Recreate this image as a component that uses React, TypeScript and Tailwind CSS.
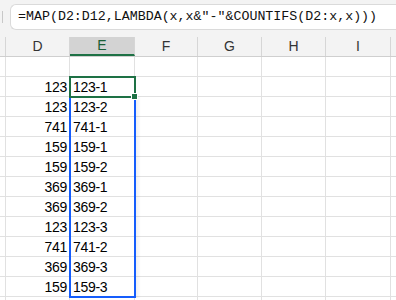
import React from 'react'

const COLS = ['D', 'E', 'F', 'G', 'H', 'I']
const WIDTHS = ['w-[64px]', 'w-[65px]', 'w-[63px]', 'w-[64px]', 'w-[64px]', 'w-[65px]']

const DATA: [number, string][] = [
  [123, '123-1'],
  [123, '123-2'],
  [741, '741-1'],
  [159, '159-1'],
  [159, '159-2'],
  [369, '369-1'],
  [369, '369-2'],
  [123, '123-3'],
  [741, '741-2'],
  [369, '369-3'],
  [159, '159-3'],
]

const FORMULA = '=MAP(D2:D12,LAMBDA(x,x&"-"&COUNTIFS(D2:x,x)))'

const Row = ({ d, e }: { d?: number; e?: string }) => (
  <div className="flex h-[20px]">
    <div className="w-[6px] shrink-0 border-b border-r border-[#e1e1e1]" />
    {COLS.map((c, i) => (
      <div
        key={c}
        className={`${WIDTHS[i]} shrink-0 border-b border-r border-[#e1e1e1] leading-[19px] pt-[1px] text-[14px] tracking-[-0.3px] text-black ${
          i === 0 ? 'text-right pr-[2px]' : 'pl-[3px]'
        }`}
      >
        {i === 0 ? d : i === 1 ? e : null}
      </div>
    ))}
    <div className="flex-1 border-b border-[#e1e1e1]" />
  </div>
)

export default function App() {
  return (
    <div className="relative w-[396px] h-[300px] overflow-hidden bg-white font-['Liberation_Sans',Arial,sans-serif]">
      {/* formula bar */}
      <div className="h-[37px] bg-[#f3f3f3] flex items-start pt-[4px]">
        <div className="w-[10px] h-[26px] flex items-center">
          <div className="w-[3px] h-[12px] border-r border-[#c8c8c8]" />
        </div>
        <div className="flex-1 h-[26px] bg-white border border-r-0 border-[#dadada] rounded-l-[6px] flex items-center pl-[7px] whitespace-nowrap overflow-hidden font-['Liberation_Mono',monospace] text-[13.3px] text-[#111]">
          {FORMULA}
        </div>
      </div>

      {/* column headers */}
      <div className="flex h-[20px] bg-[#f3f3f3] border-b border-[#cfcfcf] text-[14px] text-[#333]">
        <div className="w-[6px] shrink-0 border-r border-[#d6d6d6]" />
        {COLS.map((c, i) => (
          <div
            key={c}
            className={`${WIDTHS[i]} shrink-0 border-r border-[#d6d6d6] flex items-center justify-center ${
              c === 'E' ? 'bg-[#d3d3d3] text-[#1a5e36] border-b-2 border-b-[#1e7145]' : ''
            }`}
          >
            {c}
          </div>
        ))}
        <div className="flex-1" />
      </div>

      {/* cells */}
      <Row />
      {DATA.map(([d, e], i) => (
        <Row key={i} d={d} e={e} />
      ))}
      <Row />

      {/* selection range */}
      <div className="absolute left-[136px] top-[96px] w-[5px] h-[202px] bg-gradient-to-r from-[rgba(0,0,0,0.06)] to-transparent" />
      <div className="absolute left-[69px] top-[76px] w-[67px] h-[222px] border-2 border-solid border-blue-600" />
      {/* active cell */}
      <div className="absolute left-[69px] top-[76px] w-[67px] h-[22px] border-2 border-[#1e7145]" />
      {/* fill handle */}
      <div className="absolute left-[131px] top-[93px] w-[7px] h-[7px] bg-[#1e7145] border border-white" />
    </div>
  )
}
